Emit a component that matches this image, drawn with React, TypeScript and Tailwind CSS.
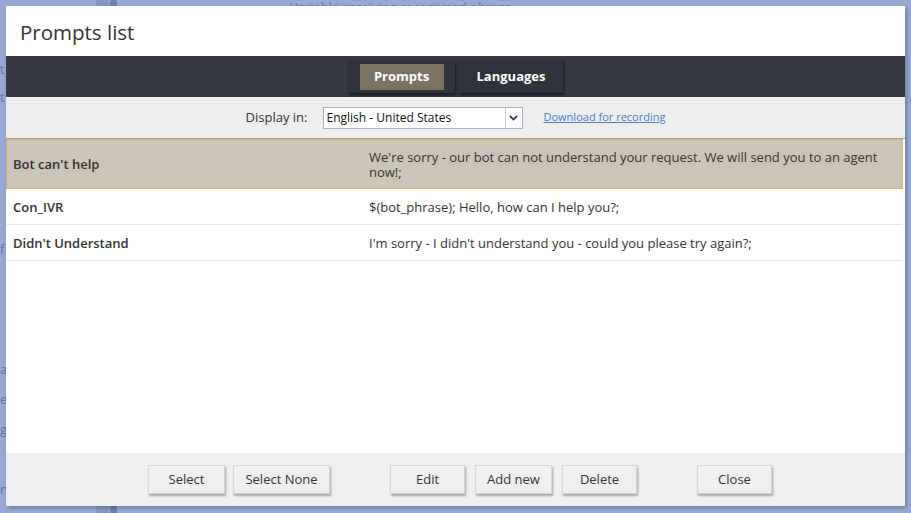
import React from "react";

const rows = [
  {
    name: "Bot can't help",
    text: "We're sorry - our bot can not understand your request. We will send you to an agent now!;",
    selected: true,
  },
  { name: "Con_IVR", text: "$(bot_phrase); Hello, how can I help you?;", selected: false },
  {
    name: "Didn't Understand",
    text: "I'm sorry - I didn't understand you - could you please try again?;",
    selected: false,
  },
];

function FooterButton({ label, w }: { label: string; w: string }) {
  return (
    <button
      className={`${w} h-[29px] border border-[#d6d6d6] bg-[#efefef] text-[13px] text-[#333] shadow-[1px_2px_2px_rgba(0,0,0,0.3)]`}
    >
      {label}
    </button>
  );
}

export default function App() {
  return (
    <div
      className="relative h-[513px] w-[911px] overflow-hidden bg-[#97a9d4]"
      style={{ fontFamily: "'Open Sans', 'Noto Sans', sans-serif" }}
    >
      {/* page behind the dialog */}
      <div className="absolute left-[96px] top-0 h-full w-[13px] bg-[#8797c0]" />
      <div className="absolute left-[110px] top-0 h-full w-[7px] bg-[#6f81ad]" />
      <div className="absolute left-[290px] top-[-1px] text-[13px] leading-[16px] text-[#6f7fa8]">
        Variable receiving recognized phrase
      </div>
      <div className="absolute left-0 top-[60px] text-[13px] text-[#5f74a8]">t</div>
      <div className="absolute left-0 top-[88px] text-[13px] text-[#5f74a8]">t</div>
      <div className="absolute left-0 top-[240px] text-[13px] text-[#5f74a8]">f</div>
      <div className="absolute left-0 top-[360px] text-[13px] text-[#5f74a8]">a</div>
      <div className="absolute left-0 top-[390px] text-[13px] text-[#5f74a8]">e</div>
      <div className="absolute left-0 top-[420px] text-[13px] text-[#5f74a8] underline">g</div>
      <div className="absolute left-0 top-[480px] text-[13px] text-[#5f74a8]">n</div>

      {/* dialog */}
      <div className="absolute left-[6px] top-[6px] flex h-[500px] w-[899px] flex-col bg-white shadow-[2px_2px_4px_rgba(0,0,0,0.25)]">
        <div className="flex h-[50px] items-center pl-[14px] pt-[2px] text-[20.5px] text-[#333]">Prompts list</div>

        <div className="flex h-[41px] items-center justify-center gap-[4px] bg-[#363a43]">
          <div className="flex h-[33px] w-[107px] items-center justify-center bg-[#2f333a] shadow-[1px_2px_3px_rgba(0,0,0,0.6)]">
            <div className="flex h-[26px] w-[84px] items-center justify-center bg-[#7b7263] text-[13px] font-bold text-white">
              Prompts
            </div>
          </div>
          <div className="flex h-[33px] w-[104px] items-center justify-center bg-[#2f333a] text-[13px] font-bold text-white shadow-[1px_2px_3px_rgba(0,0,0,0.6)]">
            Languages
          </div>
        </div>

        <div className="flex h-[42px] items-center justify-center border-b border-[#a0a0a0] bg-[#eeeeee]">
          <span className="mr-[15px] text-[13px] text-[#333]">Display in:</span>
          <div className="flex h-[22px] w-[200px] items-center border border-[#a9aec2] bg-white">
            <span className="flex-1 pl-[3px] text-[12px] text-[#111]">English - United States</span>
            <span className="flex h-full w-[17px] items-center justify-center border-l border-[#c5c9d6]">
              <svg width="9" height="6" viewBox="0 0 9 6">
                <path d="M1 1 L4.5 4.5 L8 1" stroke="#2d4270" strokeWidth="1.8" fill="none" />
              </svg>
            </span>
          </div>
          <a className="ml-[21px] text-[11px] text-[#4a7cc0] underline">Download for recording</a>
        </div>

        <div className="flex-1 pr-[2px]">
          {rows.map((r) => (
            <div
              key={r.name}
              className={`grid grid-cols-[362px_1fr] items-center border-x text-[13px] text-[#333] ${
                r.selected
                  ? "min-h-[50px] border border-dotted border-[#e0a820] bg-[#cbc4b8] pt-[1px]"
                  : "h-[36px] border-b border-x-transparent border-b-[#e6e6e6] pt-[2px]"
              }`}
            >
              <div className="pl-[6px] font-semibold">{r.name}</div>
              <div className="pr-[10px] leading-[15px]">{r.text}</div>
            </div>
          ))}
        </div>

        <div className="flex h-[53px] items-center justify-center bg-[#efefef] pl-[9px]">
          <div className="flex gap-[8px]">
            <FooterButton label="Select" w="w-[77px]" />
            <FooterButton label="Select None" w="w-[97px]" />
          </div>
          <div className="ml-[60px] flex gap-[10px]">
            <FooterButton label="Edit" w="w-[75px]" />
            <FooterButton label="Add new" w="w-[77px]" />
            <FooterButton label="Delete" w="w-[75px]" />
          </div>
          <div className="ml-[60px]">
            <FooterButton label="Close" w="w-[75px]" />
          </div>
        </div>
      </div>
    </div>
  );
}
